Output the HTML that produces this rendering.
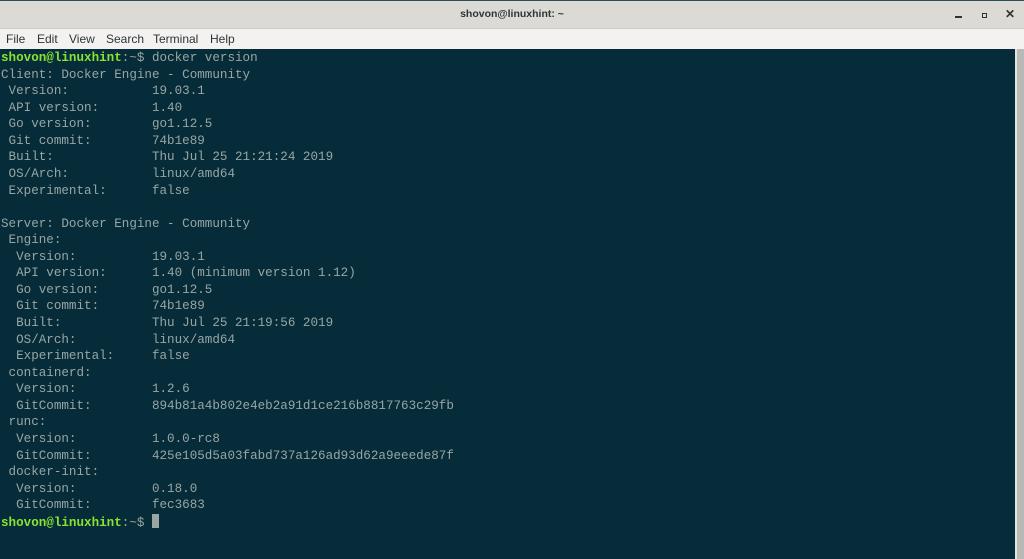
<!DOCTYPE html>
<html><head><meta charset="utf-8"><style>
*{margin:0;padding:0;box-sizing:border-box}
body{width:1024px;height:559px;overflow:hidden;background:#062c39;font-family:"Liberation Sans",sans-serif}
#title{position:absolute;left:0;top:0;width:1024px;height:29px;background:#dcdad5;border-top:1px solid #2a4f55;border-bottom:1px solid #cfcdc8}
#title .t{position:absolute;left:0;right:0;top:7px;text-align:center;font-size:10.5px;font-weight:bold;color:#2e3436}
#menu{position:absolute;left:0;top:29px;width:1024px;height:20px;background:#f3f2f1}
#menu span{position:absolute;top:3px;font-size:12px;color:#2e3436}
#term{position:absolute;left:0;top:49px;width:1015px;height:510px;background:#062c39}
#sb{position:absolute;left:1015px;top:49px;width:9px;height:510px;background:#b9b9b6;border-left:2px solid #e3e3e1}
pre{position:absolute;left:1px;top:50px;font-family:"Liberation Mono",monospace;font-size:12.58px;line-height:16.57px;color:#97a6a4;letter-spacing:0}
.g{color:#8ae234;font-weight:bold}
.cur{display:inline-block;width:7px;height:14px;background:#9aa5a4;vertical-align:-2px}
</style></head><body>
<div id="title"><div class="t">shovon@linuxhint: ~</div>
<div style="position:absolute;left:955px;top:15px;width:7px;height:1.5px;background:#2e3436"></div>
<div style="position:absolute;left:982px;top:12px;width:5px;height:5px;border:1.5px solid #2e3436"></div>
<div style="position:absolute;left:1005px;top:6px;font-size:12px;color:#2e3436;font-weight:bold">✕</div>
</div>
<div id="menu"><span style="left:6px">File</span><span style="left:37px">Edit</span><span style="left:69px">View</span><span style="left:106px">Search</span><span style="left:153px">Terminal</span><span style="left:210px">Help</span></div>
<div id="term"></div><div id="sb"></div>
<pre><span class="g">shovon@linuxhint</span>:~$ docker version
Client: Docker Engine - Community
 Version:           19.03.1
 API version:       1.40
 Go version:        go1.12.5
 Git commit:        74b1e89
 Built:             Thu Jul 25 21:21:24 2019
 OS/Arch:           linux/amd64
 Experimental:      false

Server: Docker Engine - Community
 Engine:
  Version:          19.03.1
  API version:      1.40 (minimum version 1.12)
  Go version:       go1.12.5
  Git commit:       74b1e89
  Built:            Thu Jul 25 21:19:56 2019
  OS/Arch:          linux/amd64
  Experimental:     false
 containerd:
  Version:          1.2.6
  GitCommit:        894b81a4b802e4eb2a91d1ce216b8817763c29fb
 runc:
  Version:          1.0.0-rc8
  GitCommit:        425e105d5a03fabd737a126ad93d62a9eeede87f
 docker-init:
  Version:          0.18.0
  GitCommit:        fec3683
<span class="g">shovon@linuxhint</span>:~$ <span class="cur"></span></pre>
</body></html>
